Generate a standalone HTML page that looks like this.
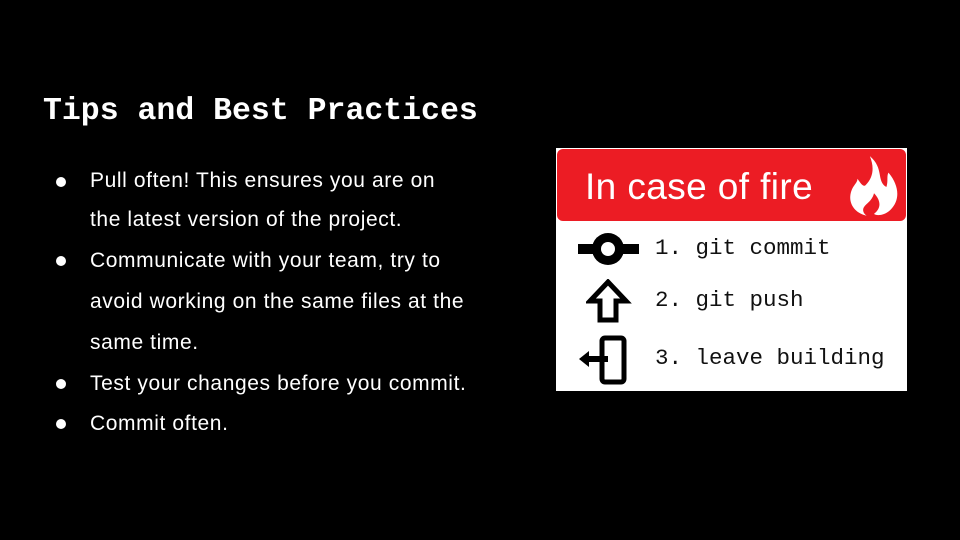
<!DOCTYPE html>
<html><head><style>
body{margin:0;width:960px;height:540px;background:#000;position:relative;overflow:hidden;font-family:"Liberation Sans",sans-serif;}
.t{position:absolute;left:43px;top:94px;font:bold 31.5px "Liberation Mono",monospace;color:#fff;}
.l{position:absolute;color:#fff;font-size:21px;letter-spacing:0.6px;left:90px;}
.b{position:absolute;left:56px;width:10px;height:10px;border-radius:50%;background:#fff;}
.img{position:absolute;left:556px;top:148px;width:351px;height:243px;background:#fff;}
.red{position:absolute;left:1px;top:1px;width:349px;height:72px;background:#ec1c24;border-radius:6px;}
.red span{position:absolute;left:28px;top:17px;color:#fff;font-size:37px;letter-spacing:0.4px;}
.m{position:absolute;left:99px;font:22.5px "Liberation Mono",monospace;color:#111;}
</style></head><body>
<div class="t">Tips and Best Practices</div>
<div class="b" style="top:177px"></div><div class="l" style="top:169px">Pull often! This ensures you are on</div>
<div class="l" style="top:208px">the latest version of the project.</div>
<div class="b" style="top:256px"></div><div class="l" style="top:249px">Communicate with your team, try to</div>
<div class="l" style="top:290px">avoid working on the same files at the</div>
<div class="l" style="top:331px">same time.</div>
<div class="b" style="top:379px"></div><div class="l" style="top:372px">Test your changes before you commit.</div>
<div class="b" style="top:419px"></div><div class="l" style="top:412px">Commit often.</div>
<div class="img">
<div class="red"><span>In case of fire</span>
<svg style="position:absolute;left:287px;top:5px" width="60" height="64" viewBox="0 0 56 62"><path d="M24 2C38 14 30 26 40 32C42 26 40 22 42 18C52 30 54 44 44 54C38 60 30 60 28 58C36 52 34 44 28 38C26 46 20 48 18 52C16 56 20 60 22 60C10 58 2 48 6 36C8 30 12 28 12 24C16 30 18 32 20 30C28 22 28 12 24 2Z" fill="#fff"/></svg>
</div>
<svg style="position:absolute;left:21px;top:84px" width="64" height="34"><rect x="1" y="12" width="61" height="10" fill="#000"/><circle cx="31" cy="17" r="16" fill="#000"/><circle cx="31" cy="17" r="7" fill="#fff"/></svg>
<svg style="position:absolute;left:30px;top:131px" width="46" height="46"><path d="M22 3L40 22H30V41H14V22H4Z" fill="none" stroke="#000" stroke-width="5"/></svg>
<svg style="position:absolute;left:22px;top:187px" width="54" height="52"><rect x="24" y="3" width="22" height="44" rx="3" fill="none" stroke="#000" stroke-width="5"/><path d="M1 24L11 16V21H30V27H11V32Z" fill="#000"/></svg>
<div class="m" style="top:87px">1. git commit</div>
<div class="m" style="top:139px">2. git push</div>
<div class="m" style="top:197px">3. leave building</div>
</div>
</body></html>
